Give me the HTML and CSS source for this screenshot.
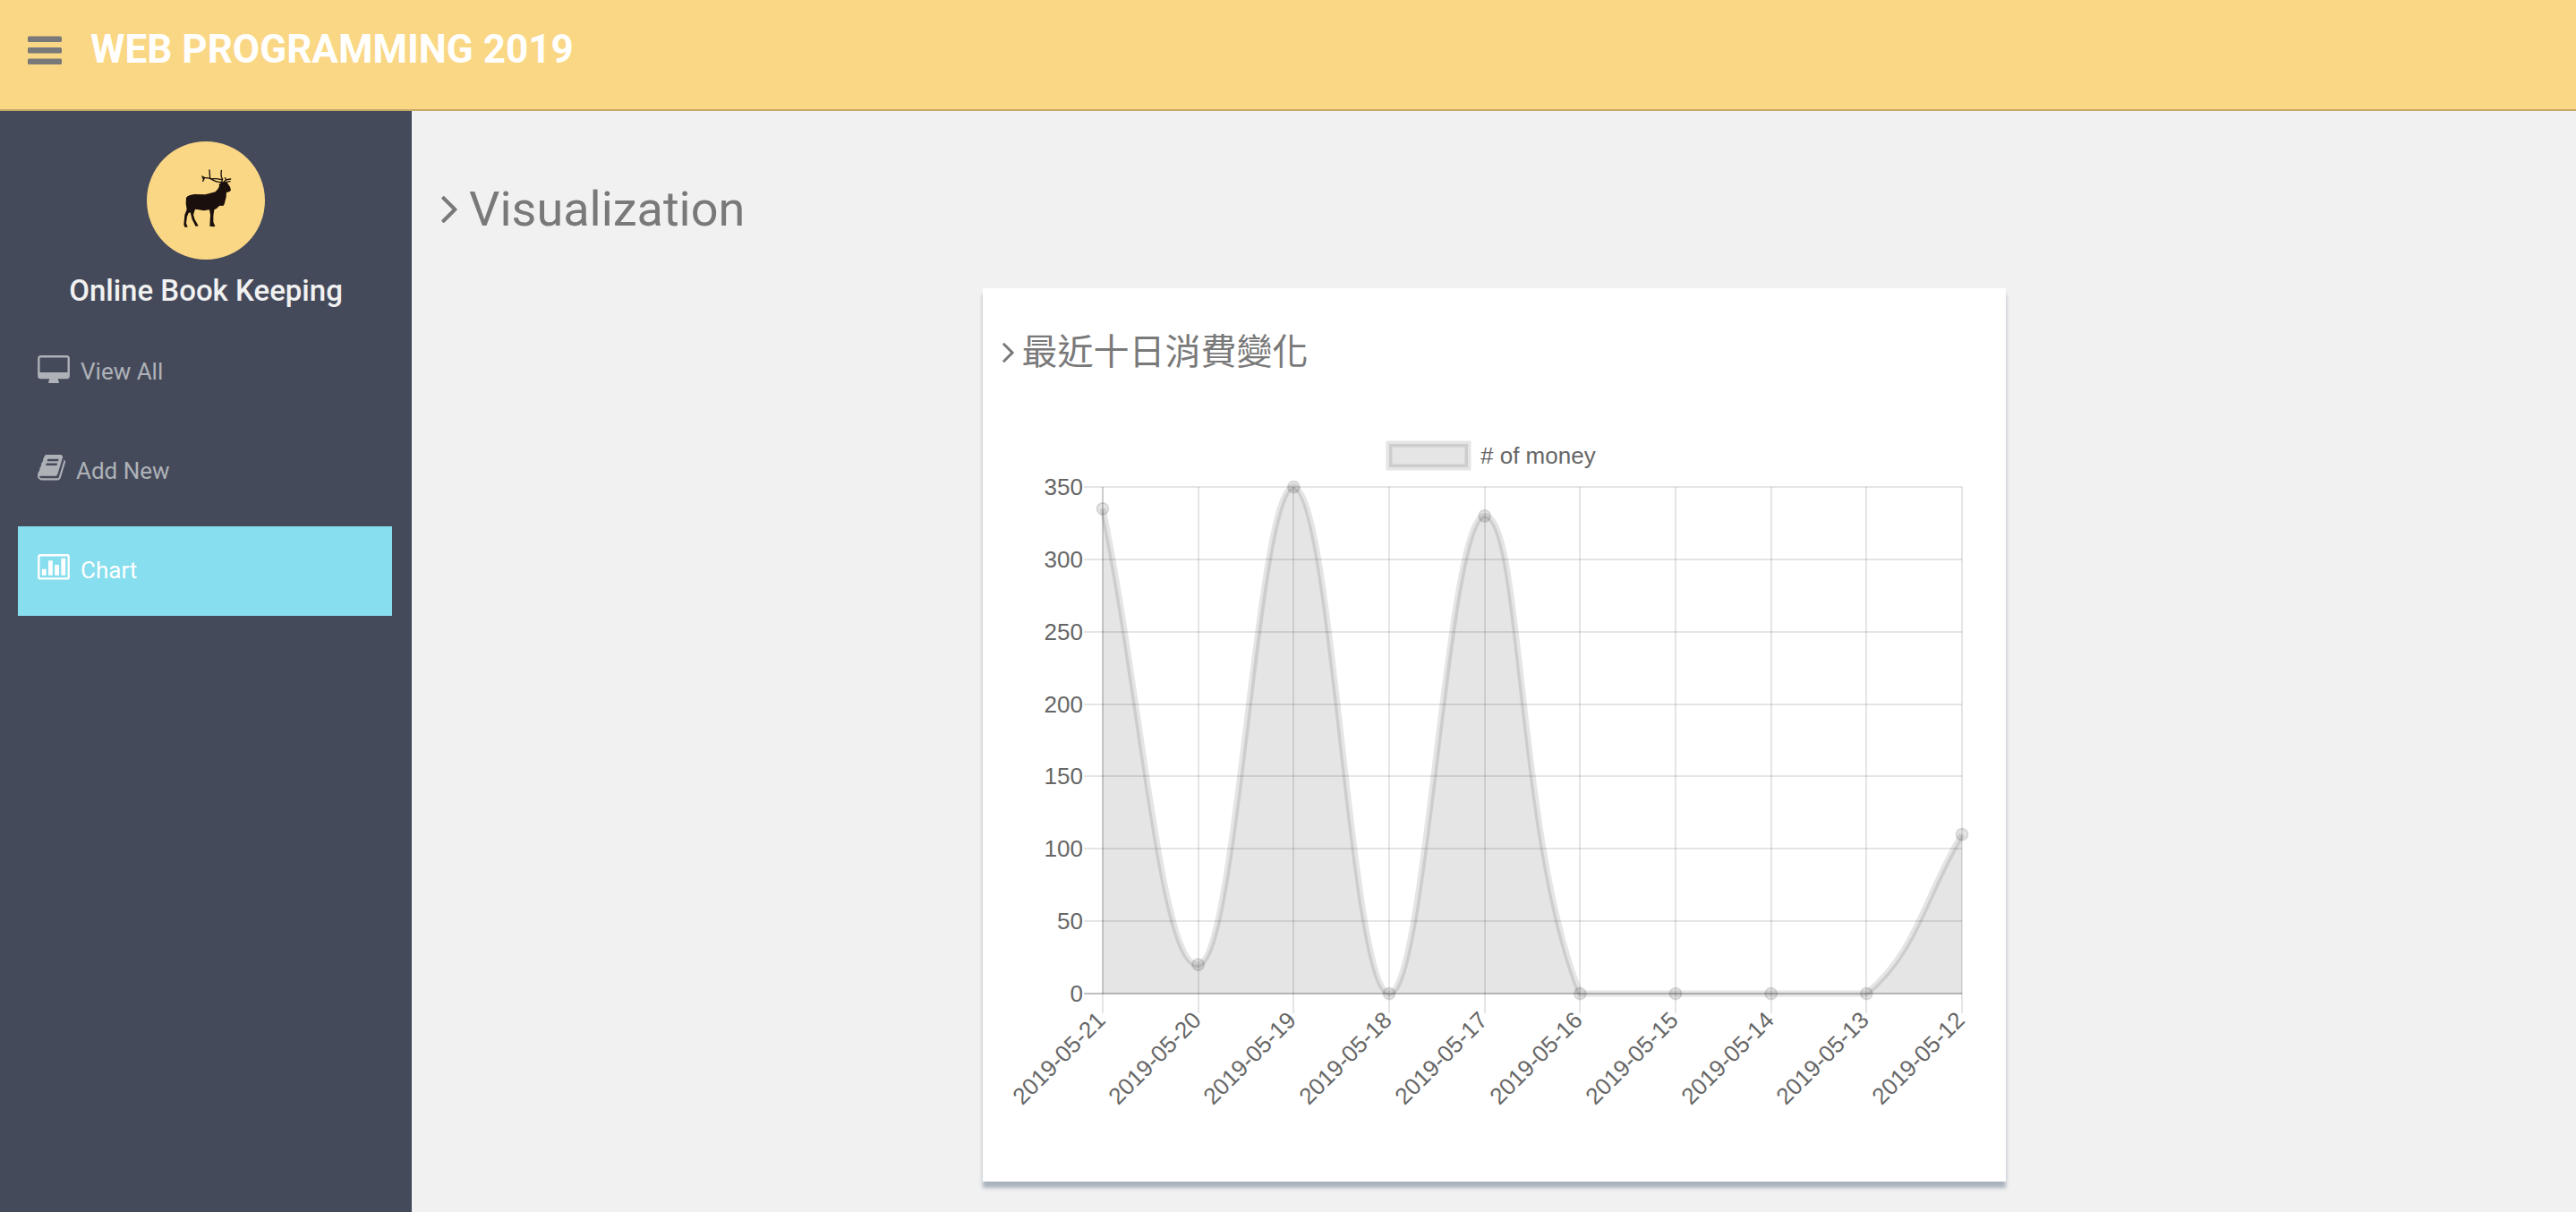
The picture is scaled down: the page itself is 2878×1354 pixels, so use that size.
FILE: index.html
```html
<!DOCTYPE html>
<html lang="zh-Hant">
<head>
<meta charset="utf-8">
<meta name="viewport" content="width=device-width, initial-scale=1">
<title>Online Book Keeping</title>
<link rel="stylesheet" href="styles.css">
</head>
<body>
<header class="topbar">
  <button class="menu-toggle" type="button" aria-label="Toggle navigation">
    <svg class="bars" viewBox="0 0 38 32" aria-hidden="true"><rect y="0.5" width="38" height="6.5" rx="1.5"/><rect y="13" width="38" height="6.5" rx="1.5"/><rect y="25.5" width="38" height="6.5" rx="1.5"/></svg>
  </button>
  <a class="logo" href="#">WEB PROGRAMMING 2019</a>
</header>
<div class="layout">
  <aside class="sidebar">
    <a class="avatar" href="#" aria-label="Home">
      <svg viewBox="72 54 396 396" aria-hidden="true">
        <g fill="#1a0f0c">
          <path d="M204 242Q212 233 232 231L268 232Q286 227 302 223Q312 214 315 204L314 197L326 189L340 190L351 206L354 217L350 222L339 225L338 240L332 264L328 270L316 269Q306 280 298 283L295 304L295 324L301 338L298 340L283 338L285 300L282 283Q262 288 246 283L234 281L228 300L233 316L245 337L236 339L224 316L218 292L212 294L207 306L204 328L209 341L199 341L196 332L199 300L206 282L203 262Z"/>
        </g>
        <g fill="none" stroke="#1a0f0c" stroke-width="4" stroke-linecap="round">
          <path d="M323 191Q302 190 287 179Q272 174 259 177M284 177L282 150M323 190L326 180Q319 174 322 151M264 174L257 171M264 179L260 187M286 180Q305 177 322 182M330 190Q336 180 353 180M338 190L351 188M338 181L334 176"/>
        </g>
      </svg>
    </a>
    <h2 class="brand">Online Book Keeping</h2>
    <nav class="menu">
      <a class="menu-item" href="#">
        <svg class="icon icon-wide" viewBox="0 0 1920 1664" aria-hidden="true"><path d="M1792 992v-832q0-13-9.500-22.500t-22.500-9.500h-1600q-13 0-22.500 9.500t-9.500 22.500v832q0 13 9.500 22.500t22.500 9.500h1600q13 0 22.500-9.500t9.500-22.500zm128-832v1088q0 66-47 113t-113 47h-544q0 37 16 77.500t32 71 16 43.500q0 26-19 45t-45 19h-512q-26 0-45-19t-19-45q0-14 16-44t32-70 16-78h-544q-66 0-113-47t-47-113v-1088q0-66 47-113t113-47h1600q66 0 113 47t47 113z"/></svg>
        <span>View All</span>
      </a>
      <a class="menu-item" href="#">
        <svg class="icon icon-book" viewBox="64 128 1664 1664" aria-hidden="true"><path d="M1703 478q40 57 18 129l-275 906q-19 64-76.500 107.500t-122.500 43.500h-923q-77 0-148.500-53.500t-99.500-131.500q-24-67-2-127 0-4 3-27t4-37q1-8-3-21.500t-3-19.500q2-11 8-21t16.500-23.500 16.500-23.500q23-38 45-91.500t30-91.500q3-10 .5-30t-.5-28q3-11 17-28t17-23q21-36 42-92t25-90q1-9-2.500-32t.5-28q4-13 22-30.500t22-22.500q19-26 42.500-84.500t27.500-96.500q1-8-3-25.500t-2-26.500q2-8 9-18t18-23 17-21q8-12 16.500-30.500t15-35 16-36 19.500-32 26.500-23.500 36-11.500 47.500 5.500l-1 3q38-9 51-9h761q74 0 114 56t18 130l-274 906q-36 119-71.500 153.500t-128.500 34.500h-869q-27 0-38 15-11 16-1 43 24 70 144 70h923q29 0 56-15.500t35-41.500l300-987q7-22 5-57 38 15 59 43zm-1064 2q-4 13 2 22.500t20 9.500h608q13 0 25.500-9.500t16.500-22.500l21-64q4-13-2-22.500t-20-9.500h-608q-13 0-25.500 9.500t-16.500 22.500zm-83 256q-4 13 2 22.500t20 9.500h608q13 0 25.500-9.500t16.500-22.500l21-64q4-13-2-22.500t-20-9.500h-608q-13 0-25.500 9.500t-16.500 22.500z"/></svg>
        <span>Add New</span>
      </a>
      <a class="menu-item active" href="#" aria-current="page">
        <svg class="icon icon-wide" viewBox="0 0 1920 1664" aria-hidden="true"><path fill-rule="evenodd" d="M160 0h1600a160 160 0 0 1 160 160v1216a160 160 0 0 1-160 160h-1600a160 160 0 0 1-160-160v-1216a160 160 0 0 1 160-160zM160 128a32 32 0 0 0-32 32v1216a32 32 0 0 0 32 32h1600a32 32 0 0 0 32-32v-1216a32 32 0 0 0-32-32zM256 896h256v384h-256zM640 384h256v896h-256zM1024 640h256v640h-256zM1408 256h256v1024h-256z"/></svg>
        <span>Chart</span>
      </a>
    </nav>
  </aside>
  <main class="content">
    <h1 class="page-title">
      <svg class="angle" viewBox="589 461 582 998" aria-hidden="true"><path d="M1171 960q0 13-10 23l-466 466q-10 10-23 10t-23-10l-50-50q-10-10-10-23t10-23l393-393-393-393q-10-10-10-23t10-23l50-50q10-10 23-10t23 10l466 466q10 10 10 23z"/></svg>
      Visualization
    </h1>
    <div class="column">
      <section class="panel">
        <h2 class="panel-title">
          <svg class="angle" viewBox="589 461 582 998" aria-hidden="true"><path d="M1171 960q0 13-10 23l-466 466q-10 10-23 10t-23-10l-50-50q-10-10-10-23t10-23l393-393-393-393q-10-10-10-23t10-23l50-50q10-10 23-10t23 10l466 466q10 10 10 23z"/></svg>
          最近十日消費變化
        </h2>
        <svg id="chart" class="chart" viewBox="0 0 1143 860" role="img" aria-label="# of money"></svg>
      </section>
    </div>
  </main>
</div>
<script src="chart.js"></script>
</body>
</html>
```
FILE: styles.css
```css
* { box-sizing: border-box; }

body {
  margin: 0;
  min-height: 100vh;
  display: flex;
  flex-direction: column;
  background: #f1f1f1;
  color: #797979;
  font-family: Roboto, "Noto Sans CJK TC", sans-serif;
}

a { color: inherit; text-decoration: none; }
h1, h2 { margin: 0; font-weight: 400; }
svg { display: block; fill: currentColor; flex: none; }

.topbar {
  display: flex;
  align-items: flex-start;
  gap: 32px;
  height: 124px;
  padding: 28px 31px;
  background: #fad784;
  border-bottom: 2px solid #c6a867;
}
.menu-toggle {
  padding: 12px 0 0;
  border: 0;
  background: none;
  color: #797979;
}
.bars { width: 38px; height: 32px; }
.logo {
  color: #fff;
  font-size: 44px;
  font-weight: 700;
  line-height: 54px;
}

.layout { display: flex; flex: 1; }

.sidebar {
  display: flex;
  flex-direction: column;
  width: 460px;
  flex: none;
  padding: 34px 0 0;
  background: #454a5b;
}
.avatar {
  width: 132px;
  height: 132px;
  margin: 0 auto;
  border-radius: 50%;
  background: #fad784;
}
.brand {
  margin-top: 16px;
  color: #f1f1f1;
  font-size: 33px;
  font-weight: 500;
  line-height: 38px;
  text-align: center;
}
.menu {
  display: flex;
  flex-direction: column;
  gap: 11px;
  margin: 22px 22px 0 20px;
}
.menu-item {
  display: flex;
  gap: 12px;
  height: 100px;
  padding: 31px 22px;
  color: #aeb2b7;
  font-size: 26px;
  line-height: 34px;
}
.menu-item.active { background: #87deee; color: #fff; }
.menu-item span { padding-top: 1px; }
.icon { height: 31px; }
.icon-wide { width: 36px; }
.icon-book { width: 31px; }

.content { flex: 1; min-width: 0; padding-top: 78px; }
.page-title, .panel-title { display: flex; align-items: center; }
.page-title {
  gap: 13px;
  padding: 0 33px;
  font-size: 54px;
  line-height: 64px;
}
.page-title .angle { width: 18px; height: 30px; }
.column {
  width: 50%;
  margin: 56px auto 0;
  padding: 0 33px 27px;
}
.panel {
  background: #fff;
  box-shadow: 0 7px 4px #aab2bd;
}
.panel-title {
  gap: 9px;
  padding: 42px 22px 36px;
  font-size: 40px;
  line-height: 60px;
}
.panel-title .angle { width: 13px; height: 22px; }

.chart { width: 100%; height: auto; }
.chart text {
  fill: #666;
  font: 26px "Liberation Sans", Arial, sans-serif;
  dominant-baseline: central;
}
.chart .tick { text-anchor: end; }
.chart .grid { stroke: rgba(0, 0, 0, 0.1); stroke-width: 2; fill: none; }
.chart .zero { stroke: rgba(0, 0, 0, 0.25); stroke-width: 2; }
.chart .area { fill: rgba(0, 0, 0, 0.1); }
.chart .line { fill: none; stroke: rgba(0, 0, 0, 0.1); stroke-width: 7; }
.chart .key { fill: rgba(0, 0, 0, 0.1); stroke: rgba(0, 0, 0, 0.1); stroke-width: 7; }
.chart .point { fill: rgba(0, 0, 0, 0.1); stroke: rgba(0, 0, 0, 0.1); stroke-width: 2; }
```
FILE: chart.js
```js
const data = [
  ['2019-05-21', 335], ['2019-05-20', 20], ['2019-05-19', 350],
  ['2019-05-18', 0], ['2019-05-17', 330], ['2019-05-16', 0],
  ['2019-05-15', 0], ['2019-05-14', 0], ['2019-05-13', 0], ['2019-05-12', 110]
];
const area = { left: 134, right: 1094, top: 84, bottom: 650 };
const maxValue = 350;
const tension = 0.4;
const svg = document.getElementById('chart');

function add(name, attrs, text) {
  const el = document.createElementNS('http://www.w3.org/2000/svg', name);
  for (const key in attrs) el.setAttribute(key, attrs[key]);
  if (text !== undefined) el.textContent = text;
  svg.appendChild(el);
}

const xAt = i => area.left + (area.right - area.left) * i / (data.length - 1);
const yAt = v => area.bottom - (area.bottom - area.top) * v / maxValue;
const points = data.map((d, i) => ({ x: xAt(i), y: yAt(d[1]) }));

// Legend
add('rect', { class: 'key', x: 454, y: 36, width: 88, height: 26 });
add('text', { x: 556, y: 49 }, '# of money');

// Grid and tick labels
for (let v = 0; v <= maxValue; v += 50) {
  const y = Math.round(yAt(v));
  add('path', { class: v ? 'grid' : 'zero', d: `M${area.left - 21} ${y}H${area.right}` });
  add('text', { class: 'tick', x: area.left - 22, y }, v);
}
data.forEach((d, i) => {
  const x = Math.round(xAt(i));
  add('path', { class: 'grid', d: `M${x} ${area.top}V${area.bottom + 22}` });
  add('text', { class: 'tick', transform: `translate(${x - 2} ${area.bottom + 25}) rotate(-45)` }, d[0]);
});
add('path', { class: 'grid', d: `M${area.left} ${area.top}V${area.bottom}` });

// Smooth curve, with control points kept inside the plotting area
const clamp = p => `${Math.min(Math.max(p.x, area.left), area.right).toFixed(1)} ${Math.min(Math.max(p.y, area.top), area.bottom).toFixed(1)}`;
const controls = points.map((p, i) => {
  const prev = points[i - 1] || p;
  const next = points[i + 1] || p;
  const before = Math.hypot(p.x - prev.x, p.y - prev.y);
  const after = Math.hypot(next.x - p.x, next.y - p.y);
  const a = tension * before / (before + after);
  const b = tension * after / (before + after);
  return {
    into: clamp({ x: p.x - a * (next.x - prev.x), y: p.y - a * (next.y - prev.y) }),
    out: clamp({ x: p.x + b * (next.x - prev.x), y: p.y + b * (next.y - prev.y) })
  };
});
let curve = `M${clamp(points[0])}`;
for (let i = 1; i < points.length; i++) {
  curve += `C${controls[i - 1].out} ${controls[i].into} ${clamp(points[i])}`;
}
add('path', { class: 'area', d: `${curve}V${area.bottom}H${area.left}Z` });
add('path', { class: 'line', d: curve });
points.forEach(p => add('circle', { class: 'point', cx: p.x, cy: p.y, r: 6.6 }));
```
